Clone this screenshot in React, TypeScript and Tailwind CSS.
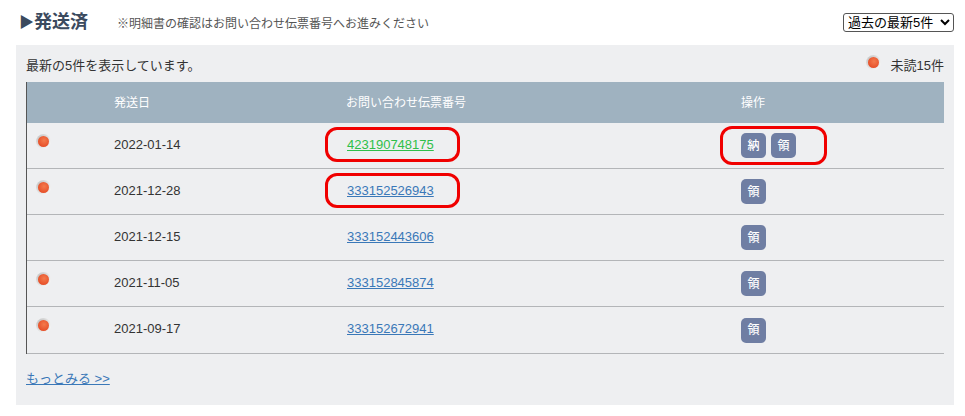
const rows = [
  { date: '2022-01-14', no: '423190748175', unread: true, visited: true, nou: true, mark: true },
  { date: '2021-12-28', no: '333152526943', unread: true, mark: true },
  { date: '2021-12-15', no: '333152443606' },
  { date: '2021-11-05', no: '333152845874', unread: true },
  { date: '2021-09-17', no: '333152672941', unread: true },
] as { date: string; no: string; unread?: boolean; visited?: boolean; nou?: boolean; mark?: boolean }[]

function Dot() {
  return (
    <span className="relative block h-[15px] w-[15px] rounded-full bg-[radial-gradient(circle_at_35%_35%,#b8b8b8,#dcdcdc_45%,#f8f8f8_80%)]">
      <span className="absolute left-[2px] top-[2px] h-[11px] w-[11px] rounded-full bg-[radial-gradient(circle_at_55%_40%,#f47a4c,#e64e28_75%)]" />
    </span>
  )
}

function OpButton({ label }: { label: string }) {
  return (
    <span className="flex h-[25px] w-[25px] items-center justify-center rounded-[5px] bg-[#6f7ea3] text-[12px] font-medium text-white">
      {label}
    </span>
  )
}

const mark = 'pointer-events-none absolute rounded-[12px] border-[3px] border-[#f00000]'
const linkColor = 'text-[#3a78b8] underline'

export default function App() {
  return (
    <div className="h-[416px] w-[965px] overflow-hidden bg-white pl-4 pr-[11px] pt-[9px] font-['Liberation_Sans','Noto_Sans_CJK_JP',sans-serif] text-[13px] text-[#333]">
      <div className="flex h-9 items-start">
        <h2 className="ml-[3px] flex h-[26px] items-center text-[18px] font-bold leading-[26px] text-[#3b4a5e]">
          <span className="mr-0 text-[15px]">▶</span>発送済
        </h2>
        <p className="ml-[29px] mt-[5px] text-[12px] leading-[20px] text-[#555]">
          ※明細書の確認はお問い合わせ伝票番号へお進みください
        </p>
        <select
          defaultValue="a"
          className="ml-auto mt-[4px] h-[19px] w-[111px] rounded-[3px] border border-[#555] bg-white text-[13px] leading-none text-black"
        >
          <option value="a">過去の最新5件</option>
        </select>
      </div>

      <div className="h-[360px] bg-[#eeeff1] px-[10px]">
        <div className="flex h-[37px] items-center justify-between pt-[4px]">
          <span>最新の5件を表示しています。</span>
          <span className="flex items-center gap-[10px]">
            <span className="-mt-[6px]">
              <Dot />
            </span>
            未読15件
          </span>
        </div>

        <div className="border-l border-[#555]">
          <div className="grid h-[41px] grid-cols-[87px_233px_394px_1fr] items-center bg-[#9fb2c0] text-[12px] text-white">
            <span />
            <span>発送日</span>
            <span className="-ml-px">お問い合わせ伝票番号</span>
            <span>操作</span>
          </div>
          {rows.map((r) => (
            <div
              key={r.no}
              className="grid h-[46px] grid-cols-[87px_233px_394px_1fr] items-center border-b border-[#b3b5b8] last:h-[47px]"
            >
              <span className="-mt-[9px] pl-[9px]">{r.unread && <Dot />}</span>
              <span className="-mt-[2px]">{r.date}</span>
              <span className="relative -mt-[2px]">
                <a href="#" className={r.visited ? 'text-[#2fbf4a] underline' : linkColor}>
                  {r.no}
                </a>
                {r.mark && <span className={`${mark} -left-[22px] -top-[8px] h-[35px] w-[135px]`} />}
              </span>
              <span className="relative flex gap-[5px]">
                {r.nou && <OpButton label="納" />}
                <OpButton label="領" />
                {r.nou && <span className={`${mark} -left-[21px] -top-[7px] h-[39px] w-[107px]`} />}
              </span>
            </div>
          ))}
        </div>

        <a href="#" className={`mt-[16px] block text-[13px] leading-[18px] ${linkColor}`}>
          もっとみる &gt;&gt;
        </a>
      </div>
    </div>
  )
}
